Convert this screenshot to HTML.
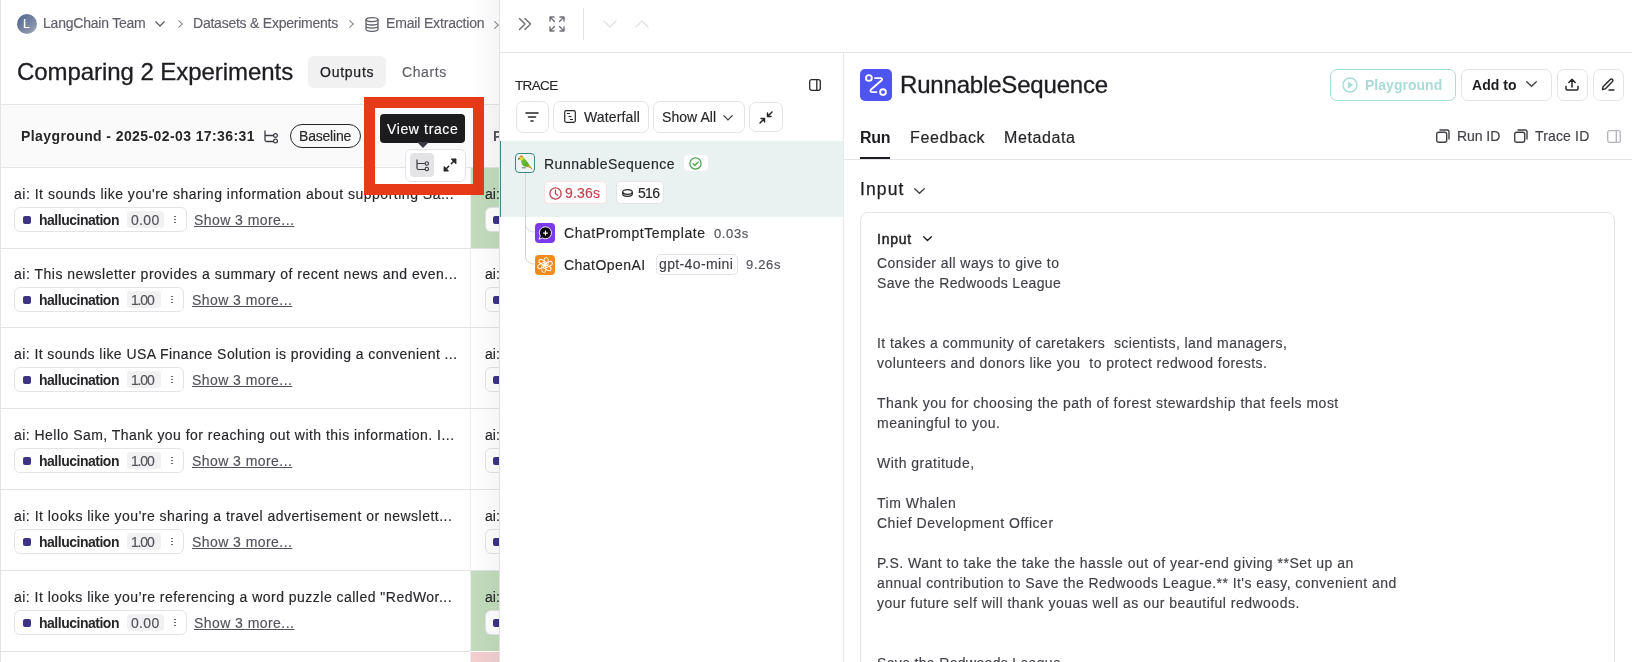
<!DOCTYPE html>
<html><head><meta charset="utf-8">
<style>
*{box-sizing:border-box;margin:0;padding:0}
html,body{width:1632px;height:662px;overflow:hidden;background:#fff;font-family:"Liberation Sans",sans-serif;color:#1c1c1f}
body{position:relative}
.a{position:absolute}
.t{position:absolute;white-space:pre;line-height:1;will-change:transform;-webkit-text-stroke:0.15px currentColor}
svg{position:absolute;overflow:visible}
</style></head><body>
<div class="a" style="left:0px;top:0px;width:1px;height:662px;background:#e4e4e7"></div>
<div class="a" style="left:17px;top:14px;width:20px;height:20px;border-radius:50%;background:linear-gradient(135deg,#4a6190 0%,#7d8aa6 60%,#a3a9b8 100%)"></div>
<div class="t" style="left:23.28px;top:17.54px;font-size:12px;color:#ffffff;">L</div>
<div class="t" style="left:42.96px;top:15.85px;font-size:14px;color:#5f5f6b;letter-spacing:-0.219px;">LangChain Team</div>
<svg style="left:155px;top:21px" width="10" height="6" viewBox="0 0 10 6"><path d="M0.8 0.8L5 5L9.2 0.8" fill="none" stroke="#5f5f6b" stroke-width="1.3" stroke-linecap="round"/></svg>
<svg style="left:177.5px;top:20px" width="5" height="8" viewBox="0 0 5 8"><path d="M0.7 0.7L4.3 4L0.7 7.3" fill="none" stroke="#8b8b95" stroke-width="1.1" stroke-linecap="round"/></svg>
<div class="t" style="left:193.16px;top:15.85px;font-size:14px;color:#5f5f6b;letter-spacing:-0.234px;">Datasets &amp; Experiments</div>
<svg style="left:349px;top:20px" width="5" height="8" viewBox="0 0 5 8"><path d="M0.7 0.7L4.3 4L0.7 7.3" fill="none" stroke="#8b8b95" stroke-width="1.1" stroke-linecap="round"/></svg>
<svg style="left:365px;top:16.5px" width="14" height="15" viewBox="0 0 14 15"><ellipse cx="7" cy="2.6" rx="6" ry="2" fill="none" stroke="#5f5f6b" stroke-width="1.3"/><path d="M1 2.6v9.6c0 1.2 2.7 2.1 6 2.1s6-.9 6-2.1V2.6M1 5.9c0 1.2 2.7 2.1 6 2.1s6-.9 6-2.1M1 9.1c0 1.2 2.7 2.1 6 2.1s6-.9 6-2.1" fill="none" stroke="#5f5f6b" stroke-width="1.3"/></svg>
<div class="t" style="left:385.86px;top:15.95px;font-size:14px;color:#5f5f6b;letter-spacing:-0.166px;">Email Extraction</div>
<svg style="left:494px;top:21px" width="5" height="8" viewBox="0 0 5 8"><path d="M0.7 0.7L4.3 4L0.7 7.3" fill="none" stroke="#8b8b95" stroke-width="1.1" stroke-linecap="round"/></svg>
<div class="t" style="left:16.66px;top:59.68px;font-size:24px;color:#1d1d21;letter-spacing:-0.059px;-webkit-text-stroke:0.3px #1d1d21;">Comparing 2 Experiments</div>
<div class="a" style="left:308px;top:56px;width:78px;height:32px;border-radius:6px;background:#f1f1f2"></div>
<div class="t" style="left:320.16px;top:65.15px;font-size:14px;color:#1f1f23;letter-spacing:0.755px;-webkit-text-stroke:0.25px #1f1f23;">Outputs</div>
<div class="t" style="left:401.66px;top:65.15px;font-size:14px;color:#5f5f68;letter-spacing:0.605px;">Charts</div>
<div class="a" style="left:1px;top:104px;width:499px;height:1px;background:#e4e4e7"></div>
<div class="a" style="left:1px;top:105px;width:499px;height:62px;background:#fafafa"></div>
<div class="a" style="left:1px;top:167px;width:499px;height:1px;background:#e4e4e7"></div>
<div class="t" style="left:20.76px;top:129.05px;font-size:14px;color:#27272a;font-weight:700;-webkit-text-stroke:0;letter-spacing:0.405px;">Playground - 2025-02-03 17:36:31</div>
<svg style="left:264px;top:129.5px" width="14" height="13" viewBox="0 0 14 13"><path d="M1 0.5V10c0 .9.6 1.5 1.5 1.5H9.5M1 5.5h8.5" fill="none" stroke="#3a3a40" stroke-width="1.3"/><circle cx="11.5" cy="5.5" r="1.9" fill="#fafafa" stroke="#3a3a40" stroke-width="1.2"/><circle cx="11.5" cy="11" r="1.9" fill="#fafafa" stroke="#3a3a40" stroke-width="1.2"/></svg>
<div class="a" style="left:290px;top:124px;width:71px;height:24px;border:1.2px solid #27272a;border-radius:12px"></div>
<div class="t" style="left:299.16px;top:128.75px;font-size:14px;color:#27272a;letter-spacing:-0.206px;">Baseline</div>
<div class="t" style="left:493.16px;top:129.05px;font-size:14px;color:#55555c;font-weight:700;-webkit-text-stroke:0;">P</div>
<div class="a" style="left:470px;top:168px;width:1px;height:494px;background:#ececee"></div>
<div class="a" style="left:471px;top:168px;width:29px;height:80px;background:#c3dcbd"></div>
<div class="a" style="left:471px;top:571px;width:29px;height:80px;background:#c3dcbd"></div>
<div class="a" style="left:471px;top:652px;width:29px;height:10px;background:#f3cfd0"></div>
<div class="t" style="left:14.16px;top:186.95px;font-size:14px;color:#27272a;letter-spacing:0.505px;">ai: It sounds like you&#x27;re sharing information about supporting Sa...</div>
<div class="a" style="left:14px;top:207px;width:173px;height:25px;border:1px solid #e4e4e7;border-radius:6px;background:#fff"></div>
<div class="a" style="left:23px;top:216px;width:8px;height:8px;border-radius:2px;background:#3b3486"></div>
<div class="t" style="left:39.36px;top:212.75px;font-size:14px;color:#27272a;font-weight:700;-webkit-text-stroke:0;letter-spacing:-0.490px;">hallucination</div>
<div class="a" style="left:127px;top:210.5px;width:37px;height:17.5px;border-radius:4px;background:#f1f1f2"></div>
<div class="t" style="left:131.16px;top:212.75px;font-size:14px;color:#52525b;letter-spacing:0.337px;">0.00</div>
<div class="a" style="left:174.3px;top:215.5px;width:1.6px;height:1.6px;border-radius:50%;background:#55555d"></div>
<div class="a" style="left:174.3px;top:218.5px;width:1.6px;height:1.6px;border-radius:50%;background:#55555d"></div>
<div class="a" style="left:174.3px;top:221.5px;width:1.6px;height:1.6px;border-radius:50%;background:#55555d"></div>
<div class="t" style="left:194.16px;top:212.75px;font-size:14px;color:#52525b;letter-spacing:0.439px;text-decoration:underline;text-underline-offset:1px;text-decoration-thickness:1px;">Show 3 more...</div>
<div class="t" style="left:484.66px;top:186.95px;font-size:14px;color:#27272a;">ai:</div>
<div class="a" style="left:485px;top:207px;width:20px;height:25px;border:1px solid #e4e4e7;border-radius:6px;background:#fff"></div>
<div class="a" style="left:493px;top:216px;width:8px;height:8px;border-radius:2px;background:#3b3486"></div>
<div class="a" style="left:1px;top:248px;width:470px;height:1px;background:#e4e4e7"></div>
<div class="a" style="left:471px;top:248px;width:29px;height:1px;background:#e4e4e7"></div>
<div class="t" style="left:14.16px;top:266.75px;font-size:14px;color:#27272a;letter-spacing:0.507px;">ai: This newsletter provides a summary of recent news and even...</div>
<div class="a" style="left:14px;top:287px;width:170px;height:25px;border:1px solid #e4e4e7;border-radius:6px;background:#fff"></div>
<div class="a" style="left:23px;top:296px;width:8px;height:8px;border-radius:2px;background:#3b3486"></div>
<div class="t" style="left:39.36px;top:292.75px;font-size:14px;color:#27272a;font-weight:700;-webkit-text-stroke:0;letter-spacing:-0.490px;">hallucination</div>
<div class="a" style="left:127px;top:290.5px;width:33.5px;height:17.5px;border-radius:4px;background:#f1f1f2"></div>
<div class="t" style="left:131.16px;top:292.75px;font-size:14px;color:#52525b;letter-spacing:-1.163px;">1.00</div>
<div class="a" style="left:171.3px;top:295.5px;width:1.6px;height:1.6px;border-radius:50%;background:#55555d"></div>
<div class="a" style="left:171.3px;top:298.5px;width:1.6px;height:1.6px;border-radius:50%;background:#55555d"></div>
<div class="a" style="left:171.3px;top:301.5px;width:1.6px;height:1.6px;border-radius:50%;background:#55555d"></div>
<div class="t" style="left:191.96px;top:292.75px;font-size:14px;color:#52525b;letter-spacing:0.439px;text-decoration:underline;text-underline-offset:1px;text-decoration-thickness:1px;">Show 3 more...</div>
<div class="t" style="left:484.66px;top:266.75px;font-size:14px;color:#27272a;">ai:</div>
<div class="a" style="left:485px;top:287px;width:20px;height:25px;border:1px solid #e4e4e7;border-radius:6px;background:#fff"></div>
<div class="a" style="left:493px;top:296px;width:8px;height:8px;border-radius:2px;background:#3b3486"></div>
<div class="a" style="left:1px;top:327px;width:470px;height:1px;background:#e4e4e7"></div>
<div class="a" style="left:471px;top:327px;width:29px;height:1px;background:#e4e4e7"></div>
<div class="t" style="left:14.16px;top:346.95px;font-size:14px;color:#27272a;letter-spacing:0.427px;">ai: It sounds like USA Finance Solution is providing a convenient ...</div>
<div class="a" style="left:14px;top:367px;width:170px;height:25px;border:1px solid #e4e4e7;border-radius:6px;background:#fff"></div>
<div class="a" style="left:23px;top:376px;width:8px;height:8px;border-radius:2px;background:#3b3486"></div>
<div class="t" style="left:39.36px;top:372.75px;font-size:14px;color:#27272a;font-weight:700;-webkit-text-stroke:0;letter-spacing:-0.490px;">hallucination</div>
<div class="a" style="left:127px;top:370.5px;width:33.5px;height:17.5px;border-radius:4px;background:#f1f1f2"></div>
<div class="t" style="left:131.16px;top:372.75px;font-size:14px;color:#52525b;letter-spacing:-1.163px;">1.00</div>
<div class="a" style="left:171.3px;top:375.5px;width:1.6px;height:1.6px;border-radius:50%;background:#55555d"></div>
<div class="a" style="left:171.3px;top:378.5px;width:1.6px;height:1.6px;border-radius:50%;background:#55555d"></div>
<div class="a" style="left:171.3px;top:381.5px;width:1.6px;height:1.6px;border-radius:50%;background:#55555d"></div>
<div class="t" style="left:191.96px;top:372.75px;font-size:14px;color:#52525b;letter-spacing:0.439px;text-decoration:underline;text-underline-offset:1px;text-decoration-thickness:1px;">Show 3 more...</div>
<div class="t" style="left:484.66px;top:346.95px;font-size:14px;color:#27272a;">ai:</div>
<div class="a" style="left:485px;top:367px;width:20px;height:25px;border:1px solid #e4e4e7;border-radius:6px;background:#fff"></div>
<div class="a" style="left:493px;top:376px;width:8px;height:8px;border-radius:2px;background:#3b3486"></div>
<div class="a" style="left:1px;top:408px;width:470px;height:1px;background:#e4e4e7"></div>
<div class="a" style="left:471px;top:408px;width:29px;height:1px;background:#e4e4e7"></div>
<div class="t" style="left:14.16px;top:427.95px;font-size:14px;color:#27272a;letter-spacing:0.467px;">ai: Hello Sam, Thank you for reaching out with this information. I...</div>
<div class="a" style="left:14px;top:448px;width:170px;height:25px;border:1px solid #e4e4e7;border-radius:6px;background:#fff"></div>
<div class="a" style="left:23px;top:457px;width:8px;height:8px;border-radius:2px;background:#3b3486"></div>
<div class="t" style="left:39.36px;top:453.75px;font-size:14px;color:#27272a;font-weight:700;-webkit-text-stroke:0;letter-spacing:-0.490px;">hallucination</div>
<div class="a" style="left:127px;top:451.5px;width:33.5px;height:17.5px;border-radius:4px;background:#f1f1f2"></div>
<div class="t" style="left:131.16px;top:453.75px;font-size:14px;color:#52525b;letter-spacing:-1.163px;">1.00</div>
<div class="a" style="left:171.3px;top:456.5px;width:1.6px;height:1.6px;border-radius:50%;background:#55555d"></div>
<div class="a" style="left:171.3px;top:459.5px;width:1.6px;height:1.6px;border-radius:50%;background:#55555d"></div>
<div class="a" style="left:171.3px;top:462.5px;width:1.6px;height:1.6px;border-radius:50%;background:#55555d"></div>
<div class="t" style="left:191.96px;top:453.75px;font-size:14px;color:#52525b;letter-spacing:0.439px;text-decoration:underline;text-underline-offset:1px;text-decoration-thickness:1px;">Show 3 more...</div>
<div class="t" style="left:484.66px;top:427.95px;font-size:14px;color:#27272a;">ai:</div>
<div class="a" style="left:485px;top:448px;width:20px;height:25px;border:1px solid #e4e4e7;border-radius:6px;background:#fff"></div>
<div class="a" style="left:493px;top:457px;width:8px;height:8px;border-radius:2px;background:#3b3486"></div>
<div class="a" style="left:1px;top:489px;width:470px;height:1px;background:#e4e4e7"></div>
<div class="a" style="left:471px;top:489px;width:29px;height:1px;background:#e4e4e7"></div>
<div class="t" style="left:14.16px;top:508.95px;font-size:14px;color:#27272a;letter-spacing:0.488px;">ai: It looks like you&#x27;re sharing a travel advertisement or newslett...</div>
<div class="a" style="left:14px;top:529px;width:170px;height:25px;border:1px solid #e4e4e7;border-radius:6px;background:#fff"></div>
<div class="a" style="left:23px;top:538px;width:8px;height:8px;border-radius:2px;background:#3b3486"></div>
<div class="t" style="left:39.36px;top:534.75px;font-size:14px;color:#27272a;font-weight:700;-webkit-text-stroke:0;letter-spacing:-0.490px;">hallucination</div>
<div class="a" style="left:127px;top:532.5px;width:33.5px;height:17.5px;border-radius:4px;background:#f1f1f2"></div>
<div class="t" style="left:131.16px;top:534.75px;font-size:14px;color:#52525b;letter-spacing:-1.163px;">1.00</div>
<div class="a" style="left:171.3px;top:537.5px;width:1.6px;height:1.6px;border-radius:50%;background:#55555d"></div>
<div class="a" style="left:171.3px;top:540.5px;width:1.6px;height:1.6px;border-radius:50%;background:#55555d"></div>
<div class="a" style="left:171.3px;top:543.5px;width:1.6px;height:1.6px;border-radius:50%;background:#55555d"></div>
<div class="t" style="left:191.96px;top:534.75px;font-size:14px;color:#52525b;letter-spacing:0.439px;text-decoration:underline;text-underline-offset:1px;text-decoration-thickness:1px;">Show 3 more...</div>
<div class="t" style="left:484.66px;top:508.95px;font-size:14px;color:#27272a;">ai:</div>
<div class="a" style="left:485px;top:529px;width:20px;height:25px;border:1px solid #e4e4e7;border-radius:6px;background:#fff"></div>
<div class="a" style="left:493px;top:538px;width:8px;height:8px;border-radius:2px;background:#3b3486"></div>
<div class="a" style="left:1px;top:570px;width:470px;height:1px;background:#e4e4e7"></div>
<div class="a" style="left:471px;top:570px;width:29px;height:1px;background:#e4e4e7"></div>
<div class="t" style="left:14.16px;top:589.95px;font-size:14px;color:#27272a;letter-spacing:0.480px;">ai: It looks like you’re referencing a word puzzle called &quot;RedWor...</div>
<div class="a" style="left:14px;top:610px;width:173px;height:25px;border:1px solid #e4e4e7;border-radius:6px;background:#fff"></div>
<div class="a" style="left:23px;top:619px;width:8px;height:8px;border-radius:2px;background:#3b3486"></div>
<div class="t" style="left:39.36px;top:615.75px;font-size:14px;color:#27272a;font-weight:700;-webkit-text-stroke:0;letter-spacing:-0.490px;">hallucination</div>
<div class="a" style="left:127px;top:613.5px;width:37px;height:17.5px;border-radius:4px;background:#f1f1f2"></div>
<div class="t" style="left:131.16px;top:615.75px;font-size:14px;color:#52525b;letter-spacing:0.337px;">0.00</div>
<div class="a" style="left:174.3px;top:618.5px;width:1.6px;height:1.6px;border-radius:50%;background:#55555d"></div>
<div class="a" style="left:174.3px;top:621.5px;width:1.6px;height:1.6px;border-radius:50%;background:#55555d"></div>
<div class="a" style="left:174.3px;top:624.5px;width:1.6px;height:1.6px;border-radius:50%;background:#55555d"></div>
<div class="t" style="left:194.16px;top:615.75px;font-size:14px;color:#52525b;letter-spacing:0.439px;text-decoration:underline;text-underline-offset:1px;text-decoration-thickness:1px;">Show 3 more...</div>
<div class="t" style="left:484.66px;top:589.95px;font-size:14px;color:#27272a;">ai:</div>
<div class="a" style="left:485px;top:610px;width:20px;height:25px;border:1px solid #e4e4e7;border-radius:6px;background:#fff"></div>
<div class="a" style="left:493px;top:619px;width:8px;height:8px;border-radius:2px;background:#3b3486"></div>
<div class="a" style="left:1px;top:651px;width:470px;height:1px;background:#e4e4e7"></div>
<div class="a" style="left:364px;top:97px;width:120px;height:98px;border:11px solid #e63a19;border-top-width:11.6px"></div>
<div class="a" style="left:405px;top:148.5px;width:61px;height:33px;border:1px solid #e4e4e7;border-radius:6px;background:#fff"></div>
<div class="a" style="left:410px;top:153px;width:24px;height:24px;border-radius:4px;background:#e4e4e7"></div>
<svg style="left:416px;top:159px" width="13" height="12" viewBox="0 0 13 12"><path d="M1 0.5V9c0 .9.6 1.5 1.5 1.5H9M1 4.5h8" fill="none" stroke="#3a3a40" stroke-width="1.2"/><circle cx="10.8" cy="4.5" r="1.7" fill="#e4e4e7" stroke="#3a3a40" stroke-width="1.1"/><circle cx="10.8" cy="10" r="1.7" fill="#e4e4e7" stroke="#3a3a40" stroke-width="1.1"/></svg>
<svg style="left:443px;top:158px" width="14" height="14" viewBox="0 0 14 14"><path d="M12.5 1.5L8.3 5.7M1.5 12.5L5.7 8.3" fill="none" stroke="#27272a" stroke-width="1.6" stroke-linecap="round"/><path d="M8.6 1.2h4.2v4.2zM1.2 8.8v4h4z" fill="#27272a" stroke="#27272a" stroke-width="1.2" stroke-linejoin="round"/></svg>
<div class="a" style="left:380px;top:114px;width:85px;height:29px;border-radius:4px;background:#1c1c1f"></div>
<svg style="left:417px;top:142px" width="12" height="6" viewBox="0 0 12 6"><path d="M0 0h12L6 6z" fill="#3b3b45"/></svg>
<div class="t" style="left:387.16px;top:121.65px;font-size:14px;color:#ffffff;letter-spacing:0.628px;">View trace</div>
<div class="a" style="left:470px;top:0px;width:29px;height:662px;background:linear-gradient(to right,rgba(0,0,0,0) 0%,rgba(0,0,0,0.035) 100%)"></div>
<div class="a" style="left:499px;top:0px;width:1133px;height:662px;background:#fff;border-left:1px solid #e2e2e5"></div>
<svg style="left:518px;top:17px" width="14" height="14" viewBox="0 0 14 14"><path d="M1.5 1.5L7 7L1.5 12.5M7 1.5L12.5 7L7 12.5" fill="none" stroke="#71717a" stroke-width="1.5" stroke-linecap="round" stroke-linejoin="round"/></svg>
<svg style="left:549px;top:16px" width="16" height="16" viewBox="0 0 16 16"><path d="M1 5V1h4M1 1l4.5 4.5M11 1h4v4M15 1l-4.5 4.5M1 11v4h4M1 15l4.5-4.5M15 11v4h-4M15 15l-4.5-4.5" fill="none" stroke="#71717a" stroke-width="1.4" stroke-linecap="round" stroke-linejoin="round"/></svg>
<div class="a" style="left:583px;top:8px;width:1px;height:32px;background:#e4e4e7"></div>
<svg style="left:603px;top:20px" width="14" height="8" viewBox="0 0 14 8"><path d="M1 1l6 6 6-6" fill="none" stroke="#e4e4e7" stroke-width="1.5" stroke-linecap="round" stroke-linejoin="round"/></svg>
<svg style="left:635px;top:20px" width="14" height="8" viewBox="0 0 14 8"><path d="M1 7l6-6 6 6" fill="none" stroke="#e4e4e7" stroke-width="1.5" stroke-linecap="round" stroke-linejoin="round"/></svg>
<div class="a" style="left:500px;top:52px;width:1132px;height:1px;background:#e4e4e7"></div>
<div class="a" style="left:843px;top:53px;width:1px;height:609px;background:#e9e9ec"></div>
<div class="t" style="left:515.19px;top:78.57px;font-size:13.5px;color:#27272a;letter-spacing:-0.638px;">TRACE</div>
<svg style="left:809px;top:79px" width="12" height="12" viewBox="0 0 12 12"><rect x="0.7" y="0.7" width="10.6" height="10.6" rx="2" fill="none" stroke="#27272a" stroke-width="1.3"/><path d="M7.8 0.7v10.6" stroke="#27272a" stroke-width="1.3"/></svg>
<div class="a" style="left:516px;top:101px;width:33px;height:32px;border:1px solid #e4e4e7;border-radius:7px"></div>
<svg style="left:525px;top:112px" width="14" height="10" viewBox="0 0 14 10"><path d="M1 1h12M3.5 5h7M6 9h2" stroke="#27272a" stroke-width="1.6" stroke-linecap="round"/></svg>
<div class="a" style="left:553px;top:101px;width:96px;height:32px;border:1px solid #e4e4e7;border-radius:7px"></div>
<svg style="left:564px;top:110px" width="12" height="13" viewBox="0 0 12 13"><rect x="0.7" y="0.7" width="10.6" height="11.6" rx="1.5" fill="none" stroke="#27272a" stroke-width="1.2"/><path d="M3 3.5h3M4.5 6.5h3M6 9.5h3" stroke="#27272a" stroke-width="1.2"/></svg>
<div class="t" style="left:584.16px;top:110.35px;font-size:14px;color:#27272a;letter-spacing:0.130px;">Waterfall</div>
<div class="a" style="left:653px;top:101px;width:92px;height:32px;border:1px solid #e4e4e7;border-radius:7px"></div>
<div class="t" style="left:661.66px;top:110.05px;font-size:14px;color:#27272a;letter-spacing:0.051px;">Show All</div>
<svg style="left:723px;top:114.5px" width="10" height="6" viewBox="0 0 10 6"><path d="M0.7 0.7L5 5L9.3 0.7" fill="none" stroke="#3f3f46" stroke-width="1.2" stroke-linecap="round"/></svg>
<div class="a" style="left:749px;top:102px;width:34px;height:30px;border:1px solid #e4e4e7;border-radius:7px"></div>
<svg style="left:759px;top:110.5px" width="14" height="13" viewBox="0 0 14 13"><path d="M1 12L5.5 7.5M2 7.5h3.5V11M13 1L8.5 5.5M12 5.5H8.5V2" fill="none" stroke="#27272a" stroke-width="1.5" stroke-linecap="round" stroke-linejoin="round"/></svg>
<div class="a" style="left:500px;top:141px;width:343px;height:76px;background:#e9f1f1"></div>
<div class="a" style="left:500px;top:141px;width:1px;height:76px;background:#3b8784"></div>
<svg style="left:525px;top:172px" width="20" height="94" viewBox="0 0 20 94"><path d="M0.5 0V52c0 4 3 8 9 8M0.5 52V84c0 4 3 8 9 8" fill="none" stroke="#d4d4d8" stroke-width="1"/></svg>
<div class="a" style="left:515px;top:153px;width:20px;height:20px;border:1px solid #3d8885;border-radius:4px;background:#edf4f4"></div>
<svg style="left:515px;top:153px" width="20" height="20" viewBox="0 0 20 20"><defs><linearGradient id="pg" x1="0" y1="0" x2="1" y2="1"><stop offset="0" stop-color="#8fd13a"/><stop offset=".55" stop-color="#4fae2a"/><stop offset=".8" stop-color="#d9a020"/><stop offset="1" stop-color="#c8401c"/></linearGradient></defs><path d="M5.2 4.2C6.8 3.2 8.6 4 9.4 5.6 11.5 8 13.8 10.8 15.6 13.6L17.6 16.4 14.2 14.6C12 13.8 10 13.6 8.6 13.2 7 11.6 6.2 9.4 6 7.2z" fill="url(#pg)"/><circle cx="6.4" cy="5.2" r="2.1" fill="#e8d43a"/><path d="M4.8 3.6c.9-.7 2.2-.7 3 .1" stroke="#d0462a" stroke-width="1" fill="none"/><path d="M4.5 4.6C3.4 4.8 3 5.8 3.3 6.8L4.6 6.2z" fill="#3a3a3a"/><path d="M6.8 14.8h4" stroke="#777" stroke-width="1"/></svg>
<div class="t" style="left:543.76px;top:156.65px;font-size:14px;color:#27272a;letter-spacing:0.497px;">RunnableSequence</div>
<div class="a" style="left:684px;top:155px;width:24px;height:16px;border-radius:4px;background:#fff"></div>
<svg style="left:689px;top:156.5px" width="13" height="13" viewBox="0 0 13 13"><circle cx="6.5" cy="6.5" r="5.6" fill="none" stroke="#43a047" stroke-width="1.2"/><path d="M4 6.7l1.8 1.8L9.2 5" fill="none" stroke="#43a047" stroke-width="1.2" stroke-linecap="round" stroke-linejoin="round"/></svg>
<div class="a" style="left:544px;top:181px;width:63px;height:23px;border:1px solid #fbe1e1;border-radius:5px;background:#fff"></div>
<svg style="left:548.5px;top:187px" width="13" height="13" viewBox="0 0 13 13"><circle cx="6.5" cy="6.5" r="5.6" fill="none" stroke="#c2414b" stroke-width="1.3"/><path d="M6.5 3.2v3.5l2.2 1.5" fill="none" stroke="#c2414b" stroke-width="1.3" stroke-linecap="round"/></svg>
<div class="t" style="left:565.16px;top:186.15px;font-size:14px;color:#c2414b;letter-spacing:0.178px;">9.36s</div>
<div class="a" style="left:615.5px;top:181px;width:48px;height:23px;border:1px solid #e4e4e7;border-radius:5px;background:#fff"></div>
<svg style="left:621.5px;top:189px" width="11" height="8" viewBox="0 0 11 8"><ellipse cx="5.5" cy="3" rx="4.8" ry="2.3" fill="none" stroke="#27272a" stroke-width="1.2"/><path d="M0.7 3v2c0 1.3 2.1 2.3 4.8 2.3s4.8-1 4.8-2.3V3" fill="none" stroke="#27272a" stroke-width="1.2"/></svg>
<div class="t" style="left:637.76px;top:186.15px;font-size:14px;color:#27272a;letter-spacing:-0.700px;">516</div>
<div class="a" style="left:535px;top:223px;width:20px;height:20px;border-radius:4px;background:#7c3aed"></div>
<svg style="left:535px;top:223px" width="20" height="20" viewBox="0 0 20 20"><path d="M10.5 3.8a6 6 0 1 1-3.2 11.1L4 16.3l1.2-3.3A6 6 0 0 1 10.5 3.8z" fill="#0b0b0f" stroke="#fff" stroke-width="0.9" stroke-linejoin="round"/><path d="M10.5 8.2v3.8M8.6 10.1h3.8" stroke="#fff" stroke-width="1.2" stroke-linecap="round"/></svg>
<div class="t" style="left:564.16px;top:225.85px;font-size:14px;color:#27272a;letter-spacing:0.556px;">ChatPromptTemplate</div>
<div class="t" style="left:714.12px;top:226.70px;font-size:13px;color:#52525b;letter-spacing:0.614px;">0.03s</div>
<div class="a" style="left:535px;top:255px;width:20px;height:20px;border-radius:4px;background:#f08c1e"></div>
<svg style="left:535px;top:255px" width="20" height="20" viewBox="0 0 20 20"><g fill="none" stroke="#fff" stroke-width="0.9"><rect x="9.2" y="2.6" width="4" height="8.2" rx="2" transform="rotate(0 10 10)"/><rect x="9.2" y="2.6" width="4" height="8.2" rx="2" transform="rotate(60 10 10)"/><rect x="9.2" y="2.6" width="4" height="8.2" rx="2" transform="rotate(120 10 10)"/><rect x="9.2" y="2.6" width="4" height="8.2" rx="2" transform="rotate(180 10 10)"/><rect x="9.2" y="2.6" width="4" height="8.2" rx="2" transform="rotate(240 10 10)"/><rect x="9.2" y="2.6" width="4" height="8.2" rx="2" transform="rotate(300 10 10)"/></g></svg>
<div class="t" style="left:564.16px;top:257.65px;font-size:14px;color:#27272a;letter-spacing:0.466px;">ChatOpenAI</div>
<div class="a" style="left:655.5px;top:253.5px;width:82px;height:21.5px;border:1px solid #e4e4e7;border-radius:5px;background:#fff"></div>
<div class="t" style="left:659.16px;top:257.05px;font-size:14px;color:#3f3f46;letter-spacing:0.373px;">gpt-4o-mini</div>
<div class="t" style="left:746.02px;top:257.90px;font-size:13px;color:#52525b;letter-spacing:0.664px;">9.26s</div>
<div class="a" style="left:860px;top:69px;width:32px;height:32px;border-radius:5px;background:#4f55f1"></div>
<svg style="left:864px;top:73px" width="24" height="24" viewBox="0 0 24 24"><circle cx="4.9" cy="5" r="2.9" fill="none" stroke="#fff" stroke-width="1.9"/><circle cx="19" cy="19.1" r="2.9" fill="none" stroke="#fff" stroke-width="1.9"/><path d="M11 5.1H16.8c1.1 0 1.7 1.3.9 2.1L6.8 16.8c-.8.8-.3 2.3.9 2.3H12.4" fill="none" stroke="#fff" stroke-width="1.9" stroke-linecap="round" stroke-linejoin="round"/></svg>
<div class="t" style="left:899.56px;top:72.58px;font-size:24px;color:#1d1d21;letter-spacing:-0.179px;-webkit-text-stroke:0.3px #1d1d21;">RunnableSequence</div>
<div class="a" style="left:1330px;top:69px;width:126px;height:32px;border:1px solid #a9dcd8;border-radius:7px"></div>
<svg style="left:1342px;top:77px" width="16" height="16" viewBox="0 0 16 16"><circle cx="8" cy="8" r="7" fill="none" stroke="#a9dcd8" stroke-width="1.5"/><path d="M6.3 5.2v5.6L10.6 8z" fill="#a9dcd8" stroke="#a9dcd8" stroke-width="1" stroke-linejoin="round"/></svg>
<div class="t" style="left:1365.16px;top:78.15px;font-size:14px;color:#a9dcd8;font-weight:700;-webkit-text-stroke:0;letter-spacing:0.027px;">Playground</div>
<div class="a" style="left:1460.5px;top:69px;width:91px;height:32px;border:1px solid #e4e4e7;border-radius:7px"></div>
<div class="t" style="left:1472.16px;top:78.15px;font-size:14px;color:#1d1d21;font-weight:700;-webkit-text-stroke:0;letter-spacing:0.066px;">Add to</div>
<svg style="left:1525.5px;top:81px" width="11" height="6" viewBox="0 0 11 6"><path d="M0.7 0.7L5.5 5.3L10.3 0.7" fill="none" stroke="#3f3f46" stroke-width="1.3" stroke-linecap="round"/></svg>
<div class="a" style="left:1556.5px;top:69px;width:31px;height:32px;border:1px solid #e4e4e7;border-radius:7px"></div>
<svg style="left:1565px;top:78px" width="14" height="13" viewBox="0 0 14 13"><path d="M7 9V1.5M3.8 4.5L7 1.3l3.2 3.2M1 8.5v2.3c0 .7.5 1.2 1.2 1.2h9.6c.7 0 1.2-.5 1.2-1.2V8.5" fill="none" stroke="#27272a" stroke-width="1.5" stroke-linecap="round" stroke-linejoin="round"/></svg>
<div class="a" style="left:1592.5px;top:69px;width:31px;height:32px;border:1px solid #e4e4e7;border-radius:7px"></div>
<svg style="left:1601px;top:78px" width="14" height="13" viewBox="0 0 14 13"><path d="M1.5 11.5l.5-2.8 7.3-7.3c.6-.6 1.6-.6 2.2 0s.6 1.6 0 2.2L4.2 10.9zM8 12h5" fill="none" stroke="#27272a" stroke-width="1.4" stroke-linecap="round" stroke-linejoin="round"/></svg>
<div class="t" style="left:859.54px;top:129.66px;font-size:16px;color:#1d1d21;font-weight:700;-webkit-text-stroke:0;letter-spacing:-0.335px;">Run</div>
<div class="t" style="left:909.74px;top:129.66px;font-size:16px;color:#27272a;letter-spacing:0.611px;-webkit-text-stroke:0.2px #27272a;">Feedback</div>
<div class="t" style="left:1004.04px;top:129.66px;font-size:16px;color:#27272a;letter-spacing:0.603px;-webkit-text-stroke:0.2px #27272a;">Metadata</div>
<div class="a" style="left:860px;top:157px;width:30px;height:2px;background:#1d1d21"></div>
<div class="a" style="left:844px;top:159px;width:788px;height:1px;background:#e4e4e7"></div>
<svg style="left:1436px;top:129px" width="14" height="14" viewBox="0 0 14 14"><rect x="0.7" y="3.3" width="10" height="10" rx="2" fill="none" stroke="#3f3f46" stroke-width="1.4"/><path d="M3.5 1h7.5c1.1 0 2 .9 2 2v7.5" fill="none" stroke="#3f3f46" stroke-width="1.4"/></svg>
<div class="t" style="left:1457.16px;top:128.95px;font-size:14px;color:#3f3f46;letter-spacing:-0.064px;">Run ID</div>
<svg style="left:1514px;top:129px" width="14" height="14" viewBox="0 0 14 14"><rect x="0.7" y="3.3" width="10" height="10" rx="2" fill="none" stroke="#3f3f46" stroke-width="1.4"/><path d="M3.5 1h7.5c1.1 0 2 .9 2 2v7.5" fill="none" stroke="#3f3f46" stroke-width="1.4"/></svg>
<div class="t" style="left:1535.16px;top:128.95px;font-size:14px;color:#3f3f46;letter-spacing:0.158px;">Trace ID</div>
<svg style="left:1607px;top:129.5px" width="14" height="13" viewBox="0 0 14 13"><rect x="0.7" y="0.7" width="12.6" height="11.6" rx="2" fill="none" stroke="#b4b4bb" stroke-width="1.3"/><path d="M9.3 0.7v11.6" stroke="#b4b4bb" stroke-width="1.3"/></svg>
<div class="t" style="left:859.75px;top:181.09px;font-size:17.5px;color:#1d1d21;letter-spacing:1.109px;-webkit-text-stroke:0.25px #1d1d21;">Input</div>
<svg style="left:913.8px;top:187.5px" width="11" height="6" viewBox="0 0 11 6"><path d="M0.7 0.7L5.5 5.3L10.3 0.7" fill="none" stroke="#3f3f46" stroke-width="1.3" stroke-linecap="round"/></svg>
<div class="a" style="left:860px;top:212px;width:755px;height:470px;border:1px solid #e4e4e7;border-radius:8px"></div>
<div class="t" style="left:876.66px;top:232.35px;font-size:14px;color:#1d1d21;letter-spacing:0.780px;-webkit-text-stroke:0.45px #1d1d21;">Input</div>
<svg style="left:922.8px;top:236px" width="9" height="6" viewBox="0 0 9 6"><path d="M0.7 0.7L4.5 4.5L8.3 0.7" fill="none" stroke="#1d1d21" stroke-width="1.3" stroke-linecap="round"/></svg>
<div class="t" style="left:876.66px;top:256.15px;font-size:14px;color:#3f3f46;letter-spacing:0.427px;">Consider all ways to give to</div>
<div class="t" style="left:876.66px;top:276.15px;font-size:14px;color:#3f3f46;letter-spacing:0.341px;">Save the Redwoods League</div>
<div class="t" style="left:876.66px;top:336.15px;font-size:14px;color:#3f3f46;letter-spacing:0.442px;">It takes a community of caretakers  scientists, land managers,</div>
<div class="t" style="left:876.66px;top:356.15px;font-size:14px;color:#3f3f46;letter-spacing:0.457px;">volunteers and donors like you  to protect redwood forests.</div>
<div class="t" style="left:876.66px;top:396.15px;font-size:14px;color:#3f3f46;letter-spacing:0.489px;">Thank you for choosing the path of forest stewardship that feels most</div>
<div class="t" style="left:876.66px;top:416.15px;font-size:14px;color:#3f3f46;letter-spacing:0.503px;">meaningful to you.</div>
<div class="t" style="left:876.66px;top:456.15px;font-size:14px;color:#3f3f46;letter-spacing:0.485px;">With gratitude,</div>
<div class="t" style="left:876.66px;top:496.15px;font-size:14px;color:#3f3f46;letter-spacing:0.510px;">Tim Whalen</div>
<div class="t" style="left:876.66px;top:516.15px;font-size:14px;color:#3f3f46;letter-spacing:0.505px;">Chief Development Officer</div>
<div class="t" style="left:876.66px;top:556.15px;font-size:14px;color:#3f3f46;letter-spacing:0.493px;">P.S. Want to take the take the hassle out of year-end giving **Set up an</div>
<div class="t" style="left:876.66px;top:576.15px;font-size:14px;color:#3f3f46;letter-spacing:0.457px;">annual contribution to Save the Redwoods League.** It&#x27;s easy, convenient and</div>
<div class="t" style="left:876.66px;top:596.15px;font-size:14px;color:#3f3f46;letter-spacing:0.482px;">your future self will thank youas well as our beautiful redwoods.</div>
<div class="t" style="left:876.66px;top:656.15px;font-size:14px;color:#3f3f46;letter-spacing:0.341px;">Save the Redwoods League</div>
</body></html>
